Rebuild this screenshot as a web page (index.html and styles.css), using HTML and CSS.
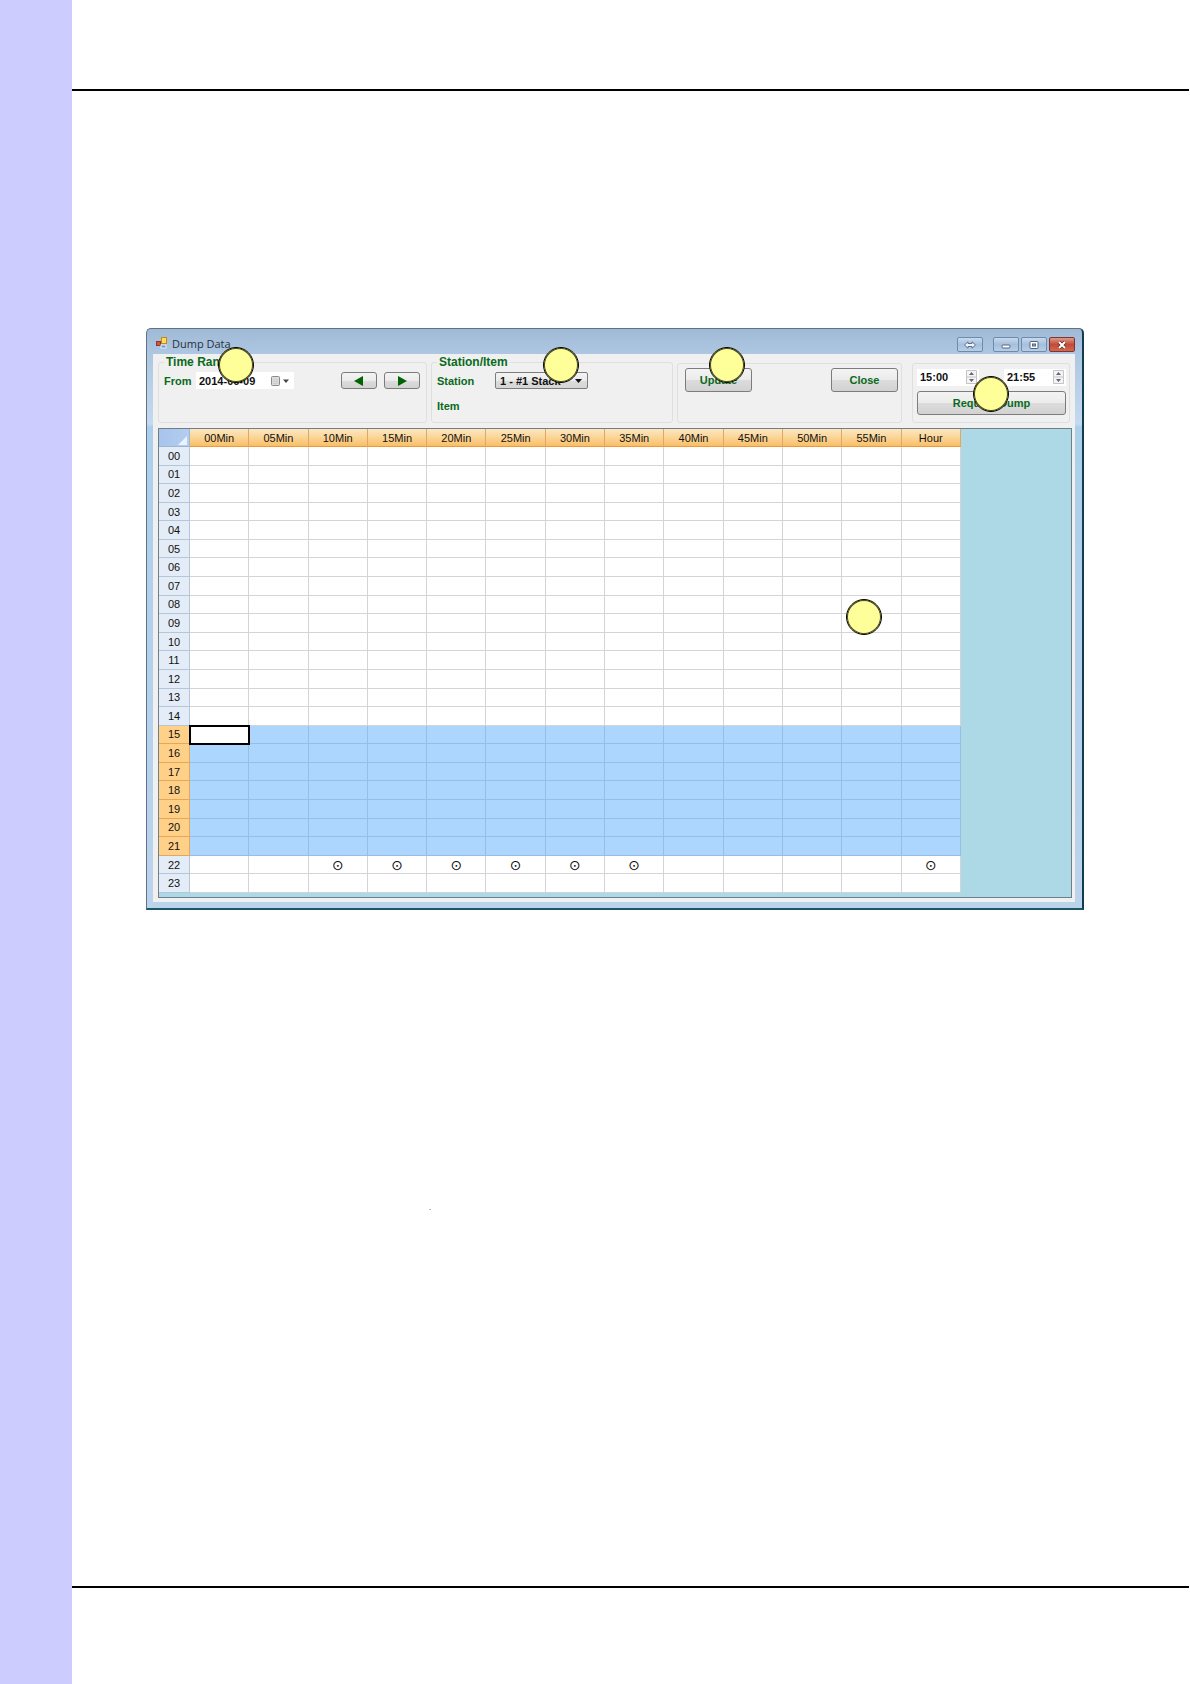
FILE: index.html
```html
<!DOCTYPE html>
<html lang="en">
<head>
<meta charset="utf-8">
<title>Dump Data</title>
<link rel="stylesheet" href="styles.css">
</head>
<body>
<aside class="side-band"></aside>
<div class="sheet">
  <header class="sheet-head"></header>
  <main class="sheet-body">
    <section class="window" aria-label="Dump Data">
      <div class="titlebar">
        <svg class="app-icon" width="12" height="12" viewBox="0 0 12 12" aria-hidden="true">
          <rect x="0.5" y="4.500" width="4" height="4" fill="#d4553a" stroke="#8c3a2c"/>
          <rect x="5.500" y="0.500" width="5" height="6" fill="#ffdc50" stroke="#c08a20"/>
          <rect x="5" y="8" width="5" height="3" fill="#6f93d0" stroke="#e8eefa"/>
        </svg>
        <span class="title">Dump Data</span>
        <button class="cap cap-move" aria-label="Switch display"><svg width="12" height="8" viewBox="0 0 12 8"><path d="M.5 4 4 .8V2.500H8V.8L11.500 4 8 7.200V5.500H4V7.200Z" fill="#eef4fb" stroke="#5c7290"/></svg></button>
        <button class="cap" aria-label="Minimize"><svg width="10" height="8" viewBox="0 0 10 8"><rect x="1" y="4" width="8" height="3" rx="1" fill="#fff" stroke="#53657d"/></svg></button>
        <button class="cap" aria-label="Maximize"><svg width="10" height="8" viewBox="0 0 10 8"><rect x="1" y=".5" width="8" height="7" rx="1" fill="#fff" stroke="#53657d"/><rect x="3.500" y="3" width="3" height="2" fill="#9db5d2" stroke="#53657d"/></svg></button>
        <button class="cap cap-close" aria-label="Close window"><svg width="10" height="8" viewBox="0 0 10 8"><path d="M2 1 8 7M8 1 2 7" stroke="#6a2a26" stroke-width="3.600"/><path d="M2 1 8 7M8 1 2 7" stroke="#fff" stroke-width="2"/></svg></button>
      </div>
      <div class="client">
        <form class="toolbar">
          <fieldset class="group">
            <legend>Time Range</legend>
            <div class="row">
              <label for="from">From</label>
              <span class="date"><input id="from" type="text" value="2014-06-09"><svg width="18" height="10" viewBox="0 0 18 10" aria-hidden="true"><rect x=".5" y=".5" width="8" height="9" rx="1" fill="#dcdcdc" stroke="#8a8a8a"/><path d="M2 3.500H7M2 5.500H7M2 7.500H7" stroke="#ccc"/><path d="M12 3.500H18L15 7Z" fill="#444"/></svg></span>
              <span class="steps">
                <button type="button" class="btn step" aria-label="Previous"><svg width="10" height="10" viewBox="0 0 10 10"><path d="M9 0V10L0 5Z" fill="#006400"/></svg></button>
                <button type="button" class="btn step" aria-label="Next"><svg width="10" height="10" viewBox="0 0 10 10"><path d="M1 0V10L10 5Z" fill="#006400"/></svg></button>
              </span>
            </div>
          </fieldset>
          <fieldset class="group">
            <legend>Station/Item</legend>
            <div class="row">
              <label class="wide" for="station">Station</label>
              <span class="combo"><select id="station"><option>1 - #1 Stack</option></select><svg width="7" height="4" viewBox="0 0 7 4" aria-hidden="true"><path d="M0 0H7L3.500 4Z" fill="#111"/></svg></span>
            </div>
            <div class="row item-row">Item</div>
          </fieldset>
          <div class="group actions">
            <button type="button" class="btn big">Update</button>
            <button type="button" class="btn big">Close</button>
          </div>
          <div class="group request">
            <div class="times">
              <span class="spin"><input type="text" value="15:00" aria-label="Start time"><svg width="11" height="14" viewBox="0 0 11 14" aria-hidden="true"><path d="M.5 .5H10.500V13.500H.5ZM.5 7H10.500" fill="#f4f4f4" stroke="#c4c4c4"/><path d="M3 5H8L5.500 2ZM3 9H8L5.500 12Z" fill="#667"/></svg></span>
              <span>~</span>
              <span class="spin"><input type="text" value="21:55" aria-label="End time"><svg width="11" height="14" viewBox="0 0 11 14" aria-hidden="true"><path d="M.5 .5H10.500V13.500H.5ZM.5 7H10.500" fill="#f4f4f4" stroke="#c4c4c4"/><path d="M3 5H8L5.500 2ZM3 9H8L5.500 12Z" fill="#667"/></svg></span>
            </div>
            <button type="button" class="btn full">Request Dump</button>
          </div>
        </form>
        <div class="grid-panel">
          <table class="grid">
            <thead>
              <tr><th class="corner"><svg width="9" height="9" viewBox="0 0 9 9" aria-hidden="true"><path d="M9 0V9H0Z" fill="#eaf4ff"/></svg></th><th>00Min</th><th>05Min</th><th>10Min</th><th>15Min</th><th>20Min</th><th>25Min</th><th>30Min</th><th>35Min</th><th>40Min</th><th>45Min</th><th>50Min</th><th>55Min</th><th>Hour</th></tr>
            </thead>
            <tbody id="rows"></tbody>
          </table>
        </div>
      </div>
      <span class="pin pin-range"></span>
      <span class="pin pin-station"></span>
      <span class="pin pin-update"></span>
      <span class="pin pin-request"></span>
      <span class="pin pin-grid"></span>
    </section>
    <p class="note">.</p>
  </main>
  <footer class="sheet-foot"></footer>
</div>
<script src="grid.js"></script>
</body>
</html>
```
FILE: grid.js
```
// One row per hour: hours 15 to 21 are selected, hour 22 holds received data.
const received = { 22: [2, 3, 4, 5, 6, 7, 12] };
const body = document.getElementById("rows");
for (let hour = 0; hour < 24; hour++) {
  const row = body.insertRow();
  if (hour >= 15 && hour <= 21) row.className = "selected";
  const head = document.createElement("th");
  head.scope = "row";
  head.textContent = String(hour).padStart(2, "0");
  row.append(head);
  for (let col = 0; col < 13; col++) {
    const cell = row.insertCell();
    if ((received[hour] || []).includes(col)) cell.textContent = "⊙";
    if (hour === 15 && col === 0) cell.className = "active";
  }
}
```
FILE: styles.css
```css
* { box-sizing: border-box; }

body {
  margin: 0;
  min-height: 100vh;
  display: grid;
  grid-template-columns: 72px 1fr;
  background: #fff;
  font: 11px/14px "Liberation Sans", Arial, sans-serif;
  color: #111;
}

.side-band { background: #ccccff; }
.sheet { display: flex; flex-direction: column; min-width: 0; padding-right: 1px; }
.sheet-head { height: 91px; border-bottom: 2px solid #000; }
.sheet-body { flex: 1; padding: 237px 105px 0 74px; }
.sheet-foot { height: 98px; border-top: 2px solid #000; }
.note { margin: 291px 0 0 283px; font-size: 8px; }

/* Window frame */
.window {
  position: relative;
  border: 1px solid #5f7387;
  border-right: 2px solid #123c50;
  border-bottom: 2px solid #1c5668;
  border-radius: 5px 5px 0 0;
  padding: 0 7px 6px 6px;
  background: linear-gradient(#a0b9d6, #aec7e2 26px, #c4daf0 95px, #abcfeb 98px, #bcd3ec);
}
.titlebar { height: 25px; display: flex; align-items: flex-start; gap: 2px; padding-top: 8px; }
.app-icon { margin-left: 3px; }
.title { flex: 1; margin-left: 2px; font: 11px/14px "Open Sans", sans-serif; color: #26313f; }
.cap {
  width: 26px; height: 15px; padding: 0;
  display: flex; align-items: center; justify-content: center;
  border: 1px solid #6f8bac; border-radius: 2px;
  background: linear-gradient(#c8daee, #a5bfdd 50%, #b8cee6);
}
.cap-move { margin-right: 8px; }
.cap-close { border-color: #7d3530; background: linear-gradient(#dc9a8c, #c24a38 50%, #d06a50); }

.client { background: #f0f0f0; padding: 2px 3px 4px 5px; }

/* Toolbar */
.toolbar {
  display: grid;
  grid-template-columns: 269fr 242fr 225fr 164fr;
  gap: 4px;
  height: 67px;
  margin: 0 2px 5px 0;
  font-weight: bold;
  color: #0a6a1c;
}
.group { min-width: 0; margin: 0; padding: 0 6px 0 5px; border: 1px solid #dfdfdf; border-radius: 3px; }
.group legend { padding: 0 2px; font-size: 12px; line-height: 12px; }
.row { display: flex; align-items: center; height: 17px; margin-top: 4px; }
.item-row { margin-top: 8px; }
.row label { width: 32px; }
.row label.wide { width: 58px; }
input, select { font: inherit; color: #111; min-width: 0; border: 0; padding: 0; background: none; }
.date { display: flex; align-items: center; width: 98px; height: 17px; padding: 0 5px 0 3px; background: #fff; }
.date input { width: 72px; }
.steps { display: flex; gap: 7px; margin-left: auto; }
.btn {
  display: flex; align-items: center; justify-content: center;
  padding: 0;
  border: 1px solid #7c7c7c; border-radius: 3px;
  background: linear-gradient(#f3f3f3, #ebebeb 50%, #dcdcdc 51%, #d2d2d2);
  font: inherit; color: #0a6a1c;
}
.step { width: 36px; height: 17px; }
.combo {
  display: flex; align-items: center; width: 93px; height: 17px; padding: 0 5px 0 4px;
  border: 1px solid #7c7c7c; border-radius: 2px;
  background: linear-gradient(#f3f3f3, #ebebeb 50%, #dcdcdc 51%, #d6d6d6);
}
.combo select { flex: 1; appearance: none; }
.actions { display: flex; justify-content: space-between; align-items: flex-start; margin-top: 7px; padding: 4px 3px 0 7px; }
.big { width: 67px; height: 24px; }
.request { margin: 7px 0 0 6px; padding: 4px 3px 0 4px; }
.times { display: flex; justify-content: space-between; align-items: center; height: 18px; }
.spin { display: flex; align-items: center; width: 62px; height: 17px; padding: 0 2px 0 3px; background: #fff; }
.spin input { flex: 1; }
.full { width: 100%; height: 24px; margin-top: 5px; }

/* Data grid */
.grid-panel { border: 1px solid #6f7f88; background: #add8e6; padding: 0 110px 4px 0; }
.grid { width: 100%; height: 464px; table-layout: fixed; border-collapse: separate; border-spacing: 0; background: #fff; }
.grid th, .grid td {
  padding: 0;
  line-height: 14px;
  text-align: center;
  font-weight: normal;
  border-right: 1px solid #d4d4d8;
  border-bottom: 1px solid #d4d4d8;
}
.grid th { font: 11px/14px "Liberation Sans", Arial, sans-serif; }
.grid td { font: 14px/14px "DejaVu Sans", sans-serif; }
.grid thead th {
  height: 18px;
  padding-top: 1px;
  border-right-color: #e0a860;
  border-bottom-color: #f09838;
  background: linear-gradient(#fbe6c4, #fbd596 50%, #f8bf68);
}
.grid thead .corner {
  width: 31px;
  border-color: #9eb6ce;
  background: linear-gradient(90deg, #a8c4ec, #b4cdf0);
  text-align: right;
  vertical-align: bottom;
}
.corner svg { display: block; margin: 0 2px 1px auto; }
.grid tbody th { background: #e4ecf7; border-color: #b4c6da; }
.grid .selected td { background: #add6ff; border-color: #98bee4; }
.grid .selected th { background: #ffd088; border-color: #e4a85c; }
.grid .selected .active { background: #fff; border: 0; outline: 2px solid #000; outline-offset: -1px; }

/* Callout markers over the window */
.pin { position: absolute; width: 36px; height: 36px; border: 1px solid #000; box-shadow: inset 0 0 0 1px #4c4c20; border-radius: 50%; background: #ffff99; }
.pin-range { left: 71px; top: 18px; }
.pin-station { left: 396px; top: 18px; }
.pin-update { left: 562px; top: 18px; }
.pin-request { left: 826px; top: 47px; }
.pin-grid { left: 699px; top: 270px; }
```
